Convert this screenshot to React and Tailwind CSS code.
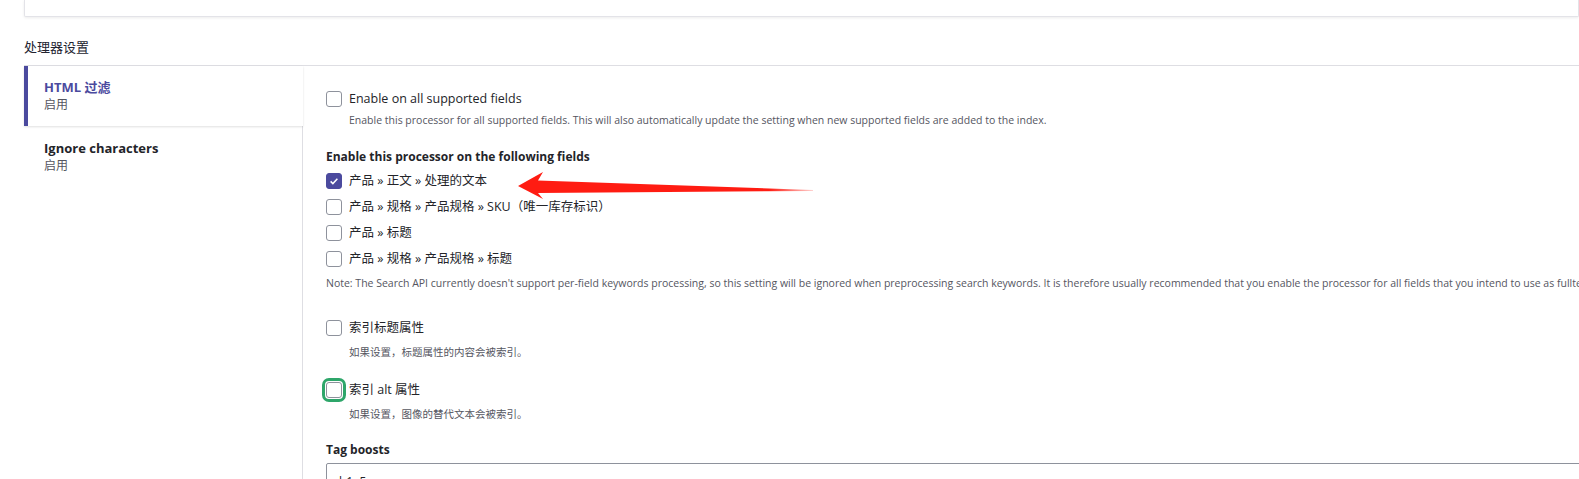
const FONT = "font-['Open_Sans','Noto_Sans_CJK_SC',sans-serif]";

const FIELDS = [
  { label: "产品 » 正文 » 处理的文本", checked: true },
  { label: "产品 » 规格 » 产品规格 » SKU（唯一库存标识）", checked: false },
  { label: "产品 » 标题", checked: false },
  { label: "产品 » 规格 » 产品规格 » 标题", checked: false },
];

function Checkbox({ checked, focused }) {
  return (
    <span
      className={`w-4 h-4 shrink-0 rounded-[3px] flex items-center justify-center ${
        checked ? "bg-[#4b4a9e] border border-[#4b4a9e]" : "bg-white border border-[#8e929c]"
      } ${focused ? "outline-[3px] outline-solid outline-[#2ea66a] outline-offset-[1px]" : ""}`}
    >
      {checked && (
        <svg viewBox="0 0 16 16" className="w-3 h-3">
          <path d="M3.5 8.5l3 3 6-6.5" fill="none" stroke="#fff" strokeWidth="2" />
        </svg>
      )}
    </span>
  );
}

function CheckRow({ label, checked, focused, className = "" }) {
  return (
    <label className={`flex items-center gap-[7px] text-[12.5px] text-[#232429] ${className}`}>
      <Checkbox checked={checked} focused={focused} />
      <span>{label}</span>
    </label>
  );
}

function Arrow() {
  return (
    <svg className="absolute left-[510px] top-[168px]" width="310" height="36" viewBox="0 0 310 36">
      <defs>
        <linearGradient id="arrowFade" x1="0" y1="0" x2="1" y2="0">
          <stop offset="0" stopColor="#ff1c12" />
          <stop offset="0.85" stopColor="#ff1c12" />
          <stop offset="1" stopColor="#ff1c12" stopOpacity="0.2" />
        </linearGradient>
      </defs>
      <path d="M8 18 L33 4 L28 12.5 L303 22 L303 23 L28 25 L33 31 Z" fill="url(#arrowFade)" />
    </svg>
  );
}

export default function App() {
  return (
    <div className={`relative w-full h-[479px] overflow-hidden bg-white ${FONT}`}>
      {/* card above, mostly scrolled away */}
      <div className="ml-6 h-[17px] bg-white border-x border-b border-[#e3e3e8] rounded-b-[2px] shadow-[0_1px_3px_rgba(0,0,0,0.08)]" />

      <h3 className="ml-6 mt-[21px] h-[18px] leading-[18px] text-[13px] text-[#222330]">处理器设置</h3>

      <div className="ml-6 mt-[9px] flex border-t border-[#dedee3]">
        {/* vertical tabs */}
        <div className="w-[279px] shrink-0 flex flex-col">
          <div className="h-[60px] border-l-4 border-[#4b4a9e] pl-4 pt-[12px] shadow-[0_1px_2px_rgba(0,0,0,0.12)] relative z-10">
            <div className="text-[13px] font-bold leading-[18px] text-[#4b4a9e]">HTML 过滤</div>
            <div className="text-[12px] leading-[18px] text-[#545560]">启用</div>
          </div>
          <div className="h-[360px] border-r border-[#dedee3] pl-5 pt-[13px]">
            <div className="text-[13px] font-bold leading-[18px] text-[#232429]">Ignore characters</div>
            <div className="text-[12px] leading-[18px] text-[#545560]">启用</div>
          </div>
        </div>

        {/* processor settings */}
        <div className="flex-1 pl-[23px] pt-[23px] flex flex-col">
          <CheckRow label="Enable on all supported fields" className="h-5" />
          <p className="mt-px h-5 leading-5 pl-[23px] text-[10.5px] text-[#55565f] whitespace-nowrap">
            Enable this processor for all supported fields. This will also automatically update the setting when new supported fields are added to the index.
          </p>

          <div className="mt-[17px] h-5 leading-5 text-[12px] font-bold text-[#232429]">
            Enable this processor on the following fields
          </div>
          <div className="mt-px flex flex-col">
            {FIELDS.map((f) => (
              <CheckRow key={f.label} label={f.label} checked={f.checked} className="h-[26px]" />
            ))}
          </div>
          <p className="mt-px h-5 leading-5 text-[10.5px] text-[#55565f] whitespace-nowrap">
            Note: The Search API currently doesn't support per-field keywords processing, so this setting will be ignored when preprocessing search keywords. It is therefore usually recommended that you enable the processor for all fields that you intend to use as fulltext search fields.
          </p>

          <CheckRow label="索引标题属性" className="mt-[25px] h-5" />
          <p className="mt-1 h-5 leading-5 pl-[23px] text-[10.5px] text-[#55565f]">如果设置，标题属性的内容会被索引。</p>

          <CheckRow label="索引 alt 属性" focused className="mt-[18px] h-5" />
          <p className="mt-1 h-5 leading-5 pl-[23px] text-[10.5px] text-[#55565f]">如果设置，图像的替代文本会被索引。</p>

          <div className="mt-[16px] h-5 leading-5 text-[12px] font-bold text-[#232429]">Tag boosts</div>
          <div className="mt-[3px] h-[60px] border border-[#8e929c] rounded-[2px] px-3 pt-[9px] text-[12px] text-[#232429]">
            h1: 5
          </div>
        </div>
      </div>

      <Arrow />
    </div>
  );
}
